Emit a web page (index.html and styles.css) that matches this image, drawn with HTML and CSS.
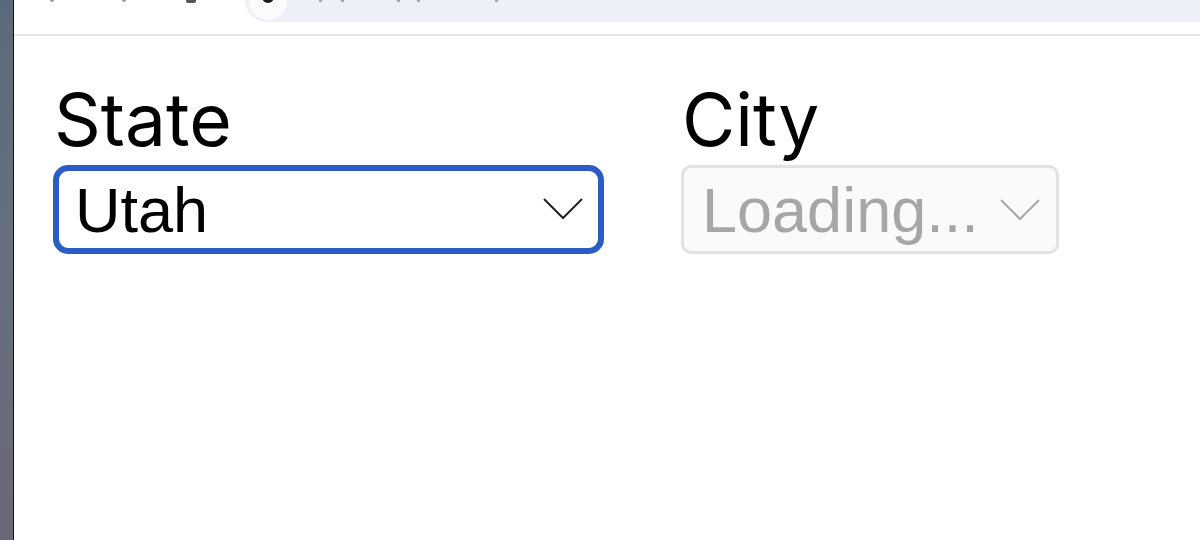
FILE: index.html
```html
<!DOCTYPE html>
<html lang="en">
<head>
  <meta charset="UTF-8">
  <meta name="viewport" content="width=device-width, initial-scale=1.0">
  <title>State / City picker</title>
  <link rel="stylesheet" href="styles.css">
</head>
<body>
  <div class="screen">
    <div class="desktop-edge"></div>

    <div class="browser">
      <div class="toolbar">
        <span class="tool-mark" style="left: 36px"></span>
        <span class="tool-mark" style="left: 108px"></span>
        <span class="tool-mark dark" style="left: 172px"></span>
        <div class="omnibox">
          <span class="site-info"><span class="site-icon"></span></span>
          <span class="url-mark" style="left: 74px"></span>
          <span class="url-mark" style="left: 96px"></span>
          <span class="url-mark" style="left: 152px"></span>
          <span class="url-mark" style="left: 172px"></span>
          <span class="url-mark" style="left: 250px"></span>
        </div>
      </div>

      <main class="page">
        <div class="field">
          <label class="field-label" for="state">State</label>
          <div class="select-wrap state-wrap">
            <select id="state" class="picker picker-focus">
              <option>Utah</option>
              <option>Idaho</option>
              <option>Nevada</option>
            </select>
            <svg class="chevron" width="40" height="22" viewBox="0 0 40 22">
              <path d="M1 1 L20 20 L39 1" fill="none" stroke="#222" stroke-width="2"/>
            </svg>
          </div>
        </div>

        <div class="field">
          <label class="field-label" for="city">City</label>
          <div class="select-wrap city-wrap">
            <select id="city" class="picker picker-disabled" disabled>
              <option>Loading...</option>
            </select>
            <svg class="chevron" width="40" height="22" viewBox="0 0 40 22">
              <path d="M1 1 L20 20 L39 1" fill="none" stroke="#a8a8a8" stroke-width="2"/>
            </svg>
          </div>
        </div>
      </main>
    </div>
  </div>
</body>
</html>
```

FILE: styles.css
```css
html, body {
  margin: 0;
  height: 100%;
  background: #fff;
}

.screen {
  display: flex;
  height: 540px;
  overflow: hidden;
}

/* sliver of the desktop behind the window */
.desktop-edge {
  width: 13px;
  flex: none;
  background: linear-gradient(180deg, #5b6a7a 0%, #66707e 45%, #6b6778 100%);
  border-right: 1px solid #111;
}

.browser {
  flex: 1;
  display: flex;
  flex-direction: column;
  min-width: 0;
}

.toolbar {
  position: relative;
  height: 34px;
  border-bottom: 2px solid #e4e4e4;
  display: flex;
  background: #fff;
}

.tool-mark {
  position: absolute;
  top: 0;
  width: 4px;
  height: 2px;
  border-radius: 0 0 2px 2px;
  background: #9a9a9a;
}

.tool-mark.dark {
  width: 10px;
  height: 3px;
  background: #555;
}

.omnibox {
  margin-left: 231px;
  flex: 1;
  height: 22px;
  background: #eef0f9;
  border-bottom-left-radius: 22px;
  position: relative;
  overflow: hidden;
}

.site-info {
  position: absolute;
  left: 4px;
  top: -18px;
  width: 38px;
  height: 38px;
  border-radius: 50%;
  background: #fbfbfe;
}

.site-icon {
  position: absolute;
  left: 13px;
  top: 14px;
  width: 12px;
  height: 7px;
  border-radius: 0 0 6px 6px;
  background: #1c1c1c;
}

/* bottoms of the url glyphs peeking below the window edge */
.url-mark {
  position: absolute;
  top: 0;
  width: 3px;
  height: 2px;
  background: #a4a6ad;
}

.page {
  flex: 1;
  display: flex;
  gap: 77px;
  padding: 47px 0 0 39px;
  align-items: flex-start;
}

.field {
  display: flex;
  flex-direction: column;
}

.field-label {
  font-family: Inter, "Liberation Sans", sans-serif;
  font-size: 73px;
  line-height: 1;
  color: #000;
  margin: 0 0 9px 1px;
}

.select-wrap {
  position: relative;
}

.picker {
  appearance: none;
  -webkit-appearance: none;
  display: block;
  box-sizing: border-box;
  height: 89px;
  margin: 0;
  padding: 0 70px 0 16px;
  font-family: "Liberation Sans", Arial, sans-serif;
  font-size: 63px;
  outline: none;
}

.picker-focus {
  width: 551px;
  border: 6px solid #2b5cc6;
  border-radius: 15px;
  background: #fff;
  color: #000;
}

.picker-disabled {
  width: 378px;
  border: 3px solid #e2e2e2;
  border-radius: 10px;
  background: #fafafa;
  color: #a6a6a6;
  padding-left: 18px;
  opacity: 1;
}

.chevron {
  position: absolute;
  top: 33px;
  pointer-events: none;
}

.state-wrap .chevron {
  right: 21px;
}

.city-wrap .chevron {
  right: 19px;
  top: 34px;
}
```
